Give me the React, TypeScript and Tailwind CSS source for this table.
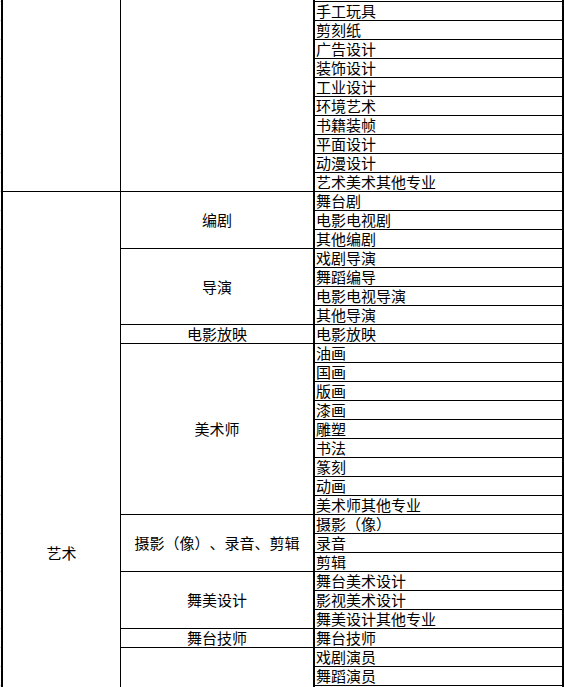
import React from 'react';

type Group = { name: string; items: string[] };

const topItems = [
  '手工玩具',
  '剪刻纸',
  '广告设计',
  '装饰设计',
  '工业设计',
  '环境艺术',
  '书籍装帧',
  '平面设计',
  '动漫设计',
  '艺术美术其他专业',
];

const artGroups: Group[] = [
  { name: '编剧', items: ['舞台剧', '电影电视剧', '其他编剧'] },
  { name: '导演', items: ['戏剧导演', '舞蹈编导', '电影电视导演', '其他导演'] },
  { name: '电影放映', items: ['电影放映'] },
  {
    name: '美术师',
    items: ['油画', '国画', '版画', '漆画', '雕塑', '书法', '篆刻', '动画', '美术师其他专业'],
  },
  { name: '摄影（像）、录音、剪辑', items: ['摄影（像）', '录音', '剪辑'] },
  { name: '舞美设计', items: ['舞台美术设计', '影视美术设计', '舞美设计其他专业'] },
  { name: '舞台技师', items: ['舞台技师'] },
  {
    name: '演员',
    items: [
      '戏剧演员',
      '舞蹈演员',
      '电影电视演员',
      '曲艺演员',
      '杂技魔术演员',
      '歌唱演员',
      '民族乐器演奏员',
      '外国乐器演奏员',
      '指挥',
      '作曲',
      '作词',
      '节目主持人',
      '播音员',
      '演员其他专业',
    ],
  },
];

const Row = ({ label }: { label: string }) => (
  <div className="flex h-[19px] items-center whitespace-nowrap border-b border-black pl-px">
    {label}
  </div>
);

export default function App() {
  return (
    <div className="h-[687px] w-[564px] overflow-hidden bg-white font-['Noto_Sans_CJK_SC',sans-serif] text-[15px] leading-[18px] text-black [text-spacing-trim:space-all]">
      <div className="flex">
        {/* sheet gridline ticks on the far left */}
        <div className="w-px shrink-0 bg-[repeating-linear-gradient(to_bottom,transparent_0,transparent_1px,#c8cfdc_1px,#c8cfdc_2px,transparent_2px,transparent_19px)]" />

        <div className="flex flex-col border-l-2 border-black">
          {/* tail of the previous section */}
          <div className="flex">
            <div className="w-[118px] shrink-0 border-b border-r border-black" />
            <div className="w-[194px] shrink-0 border-b border-r-2 border-black" />
            <div className="w-[249px] shrink-0 border-r-2 border-black pt-px">
              <div className="border-t border-black">
                {topItems.map((item) => (
                  <Row key={item} label={item} />
                ))}
              </div>
            </div>
          </div>

          {/* 艺术 */}
          <div className="flex">
            <div className="flex w-[118px] shrink-0 items-center justify-center border-b border-r border-black">
              艺术
            </div>
            <div className="flex flex-col">
              {artGroups.map((group) => (
                <div key={group.name} className="flex">
                  <div className="flex w-[194px] shrink-0 items-center justify-center whitespace-nowrap border-b border-r-2 border-black">
                    {group.name}
                  </div>
                  <div className="w-[249px] shrink-0 border-r-2 border-black">
                    {group.items.map((item) => (
                      <Row key={item} label={item} />
                    ))}
                  </div>
                </div>
              ))}
            </div>
          </div>
        </div>
      </div>
    </div>
  );
}
